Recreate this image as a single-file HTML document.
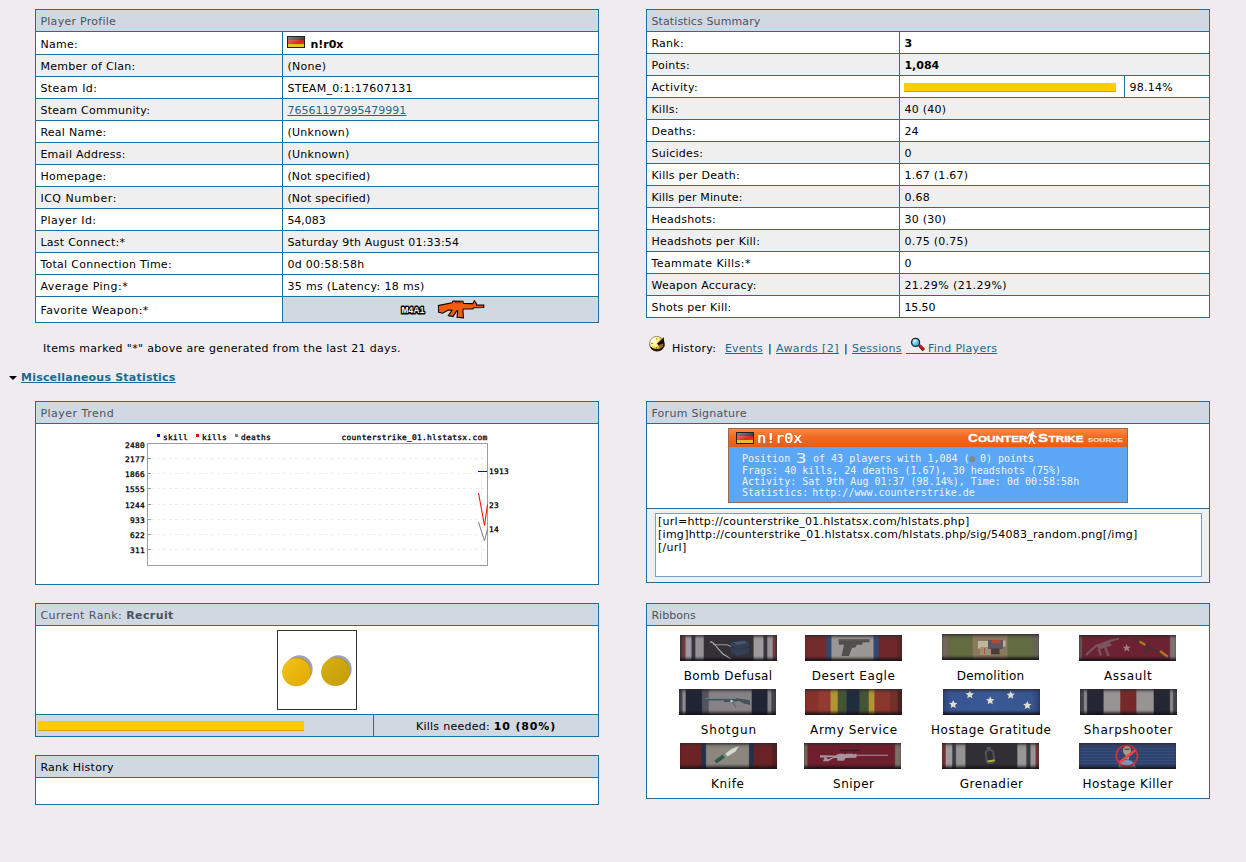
<!DOCTYPE html>
<html lang="en">
<head>
<meta charset="utf-8">
<title>HLstatsX - Player Details</title>
<style>
html,body{margin:0;padding:0;}
body{width:1246px;height:862px;background:#efebef;position:relative;overflow:hidden;
 font-family:"DejaVu Sans","Liberation Sans",sans-serif;font-size:11px;color:#000;}
.tbl{position:absolute;background:#1b719b;padding:1px;display:grid;gap:1px;box-sizing:border-box;}
.tbl>div{background:#fff;padding-left:4.4px;white-space:nowrap;overflow:hidden;box-sizing:border-box;
 display:flex;align-items:center;letter-spacing:0.27px;}
.tbl>div.h{background:#d0d8e1;color:#4d535b;grid-column:1/-1;}
.tbl>div.a{background:#efefef;}
a{color:#1b6a8e;text-decoration:underline;}
b{font-weight:bold;letter-spacing:0;}
#profile{left:35px;top:9px;width:564px;grid-template-columns:246px 315px;
 grid-template-rows:21px 22px repeat(11,21px) 25px;}
#summary{left:646px;top:9px;width:564px;grid-template-columns:252px 224px 84px;
 grid-template-rows:repeat(14,21px);}
#summary>div.v{grid-column:2/4;}
.abs{position:absolute;white-space:nowrap;letter-spacing:0.27px;}

.tbl>div{padding-top:2px;}
.flag{display:inline-block;width:18px;height:12px;box-sizing:border-box;border:1px solid #222;
 background:linear-gradient(#222 0,#3a3a3a 33%,#d8261c 33%,#e0301c 66%,#f0b420 66%,#e8c040 100%);margin-right:5px;position:relative;top:-2px;}
.flag:after{content:"";position:absolute;left:0;top:0;right:0;bottom:0;background:linear-gradient(160deg,rgba(255,255,255,.45) 0,rgba(255,255,255,.12) 45%,rgba(255,255,255,0) 55%);}
.bar{display:inline-block;height:9px;background:#ffcc00;border-bottom:1px solid #d8a000;box-sizing:border-box;}
.tbl>div.wpn{background:#d0d8e1;padding:0;position:relative;}
#misc{left:21px;top:371px;font-weight:bold;letter-spacing:0.21px;}
#misc a{text-underline-offset:1px;}
.tri{position:absolute;left:9px;top:376px;width:0;height:0;border-left:4px solid transparent;border-right:4px solid transparent;border-top:4px solid #000;}


#trend{left:35px;top:401px;width:564px;grid-template-columns:562px;grid-template-rows:21px 160px;}
#trend>div.c{padding:0;display:block;}
#sig{left:646px;top:401px;width:564px;grid-template-columns:562px;grid-template-rows:21px 84px 73px;}
#sig>div.c{padding:0;display:block;position:relative;letter-spacing:0;}
#rank{left:35px;top:603px;width:564px;grid-template-columns:337px 224px;grid-template-rows:21px 88px 21px;}
#rankh{left:35px;top:755px;width:564px;grid-template-columns:562px;grid-template-rows:21px 26px;}
#ribbons{left:646px;top:603px;width:564px;grid-template-columns:562px;grid-template-rows:21px 172px;}
.mono{font-family:"DejaVu Sans Mono","Liberation Mono",monospace;}
.sigbox{position:absolute;left:81px;top:4px;width:400px;height:75px;box-sizing:border-box;border:1px solid #9a6a50;background:#5ca6f6;overflow:hidden;}
.sigtop{position:absolute;left:0;top:0;width:398px;height:18px;background:linear-gradient(#f88a48 0,#f06a22 45%,#e85c14 100%);}
.sigtxt{position:absolute;left:13px;color:#eef4fc;font-size:10px;line-height:11px;white-space:pre;}
.ta{position:absolute;left:8px;top:4px;width:547px;height:64px;box-sizing:border-box;border:1px solid #7f9db9;background:#fff;
 font-family:"DejaVu Sans","Liberation Sans",sans-serif;font-size:11px;line-height:13px;padding:1px 2px;letter-spacing:0.27px;white-space:pre;overflow:hidden;color:#000;}
.rib{position:absolute;width:97px;height:26px;overflow:hidden;filter:brightness(1.12) saturate(.95);}
.rib:after{content:"";position:absolute;left:0;top:0;right:0;bottom:0;background:linear-gradient(rgba(48,40,44,.8) 0,rgba(48,40,44,.5) 1.5px,rgba(48,40,44,.15) 3px,rgba(0,0,0,0) 5px,rgba(0,0,0,0) 21px,rgba(20,16,20,.35) 23px,rgba(20,16,20,.85) 25px);box-shadow:inset 0 0 2px 0 rgba(20,16,20,.55);}
.rl{position:absolute;font-size:12px;width:160px;text-align:center;letter-spacing:0.3px;white-space:nowrap;}
</style>
</head>
<body>

<div class="tbl" id="profile">
 <div class="h">Player Profile</div>
 <div>Name:</div><div><span class="flag"></span><b>n!r0x</b></div>
 <div class="a">Member of Clan:</div><div class="a">(None)</div>
 <div style="letter-spacing:0.46px">Steam Id:</div><div>STEAM_0:1:17607131</div>
 <div class="a">Steam Community:</div><div class="a" style="letter-spacing:0px"><a>76561197995479991</a></div>
 <div>Real Name:</div><div>(Unknown)</div>
 <div class="a">Email Address:</div><div class="a">(Unknown)</div>
 <div>Homepage:</div><div style="letter-spacing:0.16px">(Not specified)</div>
 <div class="a" style="letter-spacing:0.52px">ICQ Number:</div><div class="a" style="letter-spacing:0.16px">(Not specified)</div>
 <div style="letter-spacing:0.44px">Player Id:</div><div style="letter-spacing:-0.03px">54,083</div>
 <div class="a">Last Connect:*</div><div class="a" style="letter-spacing:0.20px">Saturday 9th August 01:33:54</div>
 <div>Total Connection Time:</div><div>0d 00:58:58h</div>
 <div style="letter-spacing:0.46px">Average Ping:*</div><div style="letter-spacing:0.34px">35 ms (Latency: 18 ms)</div>
 <div style="letter-spacing:0.43px">Favorite Weapon:*</div><div class="wpn"><svg style="position:absolute;left:112px;top:0" width="100" height="25" viewBox="395 297 100 25">
  <text x="401.5" y="313" font-family="'Liberation Sans','DejaVu Sans',sans-serif" font-weight="bold" font-size="9.5" textLength="23" lengthAdjust="spacingAndGlyphs" fill="#000" stroke="#000" stroke-width="3" stroke-linejoin="round">M4A1</text>
  <text x="401.5" y="313" font-family="'Liberation Sans','DejaVu Sans',sans-serif" font-weight="bold" font-size="9.5" textLength="23" lengthAdjust="spacingAndGlyphs" fill="#fff">M4A1</text>
  <path d="M438.4 305.6L439 305.4 452 302.7 453 301 462.9 301.2 463.5 303.4 471.8 303.6 472.9 303.6 474.4 300.8 476.5 304 476.5 305.1 483.8 305.1 483.8 307.5 473.4 307.7 472.9 309 463.5 309 462.9 310.3 463.5 317.8 457 317.3 457.7 310.9 456.7 310.9 453 316.6 448.3 315.6 452 310.3 448.3 310 442.6 313.2 438.6 312.4Z" fill="#f25a0e" stroke="#100800" stroke-width="1.1" stroke-linejoin="miter"/><path d="M455 302.7h6.5" stroke="#7a2c04" stroke-width=".9"/>
 </svg></div>
</div>

<div class="tbl" id="summary">
 <div class="h" style="letter-spacing:0.12px">Statistics Summary</div>
 <div>Rank:</div><div class="v"><b>3</b></div>
 <div class="a">Points:</div><div class="a v"><b>1,084</b></div>
 <div>Activity:</div><div><span class="bar" style="width:212px"></span></div><div>98.14%</div>
 <div class="a">Kills:</div><div class="a v">40 (40)</div>
 <div>Deaths:</div><div class="v" style="letter-spacing:0px">24</div>
 <div class="a">Suicides:</div><div class="a v">0</div>
 <div>Kills per Death:</div><div class="v">1.67 (1.67)</div>
 <div class="a" style="letter-spacing:0.15px">Kills per Minute:</div><div class="a v">0.68</div>
 <div>Headshots:</div><div class="v">30 (30)</div>
 <div class="a">Headshots per Kill:</div><div class="a v">0.75 (0.75)</div>
 <div style="letter-spacing:0.44px">Teammate Kills:*</div><div class="v">0</div>
 <div class="a">Weapon Accuracy:</div><div class="a v" style="letter-spacing:0.45px">21.29% (21.29%)</div>
 <div>Shots per Kill:</div><div class="v" style="letter-spacing:-0.10px">15.50</div>
</div>


<div class="abs" id="note" style="left:43px;top:342px;letter-spacing:0.33px">Items marked "*" above are generated from the last 21 days.</div>
<div class="tri"></div>
<div class="abs" id="misc"><a>Miscellaneous Statistics</a></div>

<div class="abs" id="hist" style="left:672px;top:342px;">History:</div>
<div class="abs" style="left:725px;top:342px;letter-spacing:0.1px"><a>Events</a></div>
<div class="abs" style="left:768px;top:342px;">|</div>
<div class="abs" style="left:776px;top:342px;letter-spacing:0.39px"><a>Awards [2]</a></div>
<div class="abs" style="left:844px;top:342px;">|</div>
<div class="abs" style="left:852px;top:342px;"><a>Sessions</a></div>
<div class="abs" style="left:928px;top:342px;"><a>Find Players</a></div>
<div class="abs" style="left:906px;top:353px;width:23px;height:1px;background:#1b6a8e;"></div>


<svg class="abs" style="left:648px;top:335px" width="18" height="18" viewBox="0 0 18 18">
 <defs><radialGradient id="hg" cx="0.3" cy="0.3" r="0.8"><stop offset="0" stop-color="#fff"/><stop offset="0.45" stop-color="#fff48a"/><stop offset="0.8" stop-color="#f0c000"/><stop offset="1" stop-color="#c08800"/></radialGradient></defs>
 <circle cx="9" cy="9" r="7.6" fill="#1a1400"/>
 <circle cx="8.6" cy="8.4" r="7" fill="url(#hg)" stroke="#8a8a8a" stroke-width="0.8"/>
 <path d="M9 8.5L15.8 2.2L16.6 11.5L12.5 13.5z" fill="#100c08"/>
 <path d="M10 10L15.5 8.5L15 12.5L12 14z" fill="#b07830" opacity="0.8"/>
 <path d="M3 12.5C5 16 12 17 15 12.5C13 15 5.5 15.5 3 12.5z" fill="#201800" stroke="#201800" stroke-width="1.2"/>
 <path d="M9 8.5L15 2.5" stroke="#c89000" stroke-width="1" stroke-dasharray="1 0.6"/>
 <path d="M8.7 3v1.8" stroke="#e09000" stroke-width="1"/>
 <path d="M3.2 8.5h1.6M8.7 12v2" stroke="#6a5a30" stroke-width="0.9"/>
</svg>
<svg class="abs" style="left:910px;top:337px" width="16" height="15" viewBox="0 0 16 15">
 <defs><radialGradient id="mg" cx="0.35" cy="0.3" r="0.8"><stop offset="0" stop-color="#e8ffff"/><stop offset="0.5" stop-color="#5ccdf0"/><stop offset="1" stop-color="#2a9ae0"/></radialGradient></defs>
 <path d="M9.5 8.5L13.8 13.2" stroke="#201010" stroke-width="3.2" stroke-linecap="butt"/>
 <path d="M9.3 8.0L13.6 12.7" stroke="#e81020" stroke-width="1.9"/>
 <circle cx="5.6" cy="5.4" r="4" fill="url(#mg)" stroke="#202020" stroke-width="1.3"/>
</svg>
<div class="tbl" id="trend">
 <div class="h" style="letter-spacing:0.49px">Player Trend</div>
 <div class="c"><svg width="562" height="160" viewBox="36 424 562 160" style="display:block">
  <rect x="147.5" y="443.5" width="340" height="122" fill="#fff" stroke="#98a0a0" stroke-width="1"/>
  <g stroke="#ececec" stroke-width="1" stroke-dasharray="3 3" fill="none">
   <path d="M151 458.5H487M151 473.5H487M151 488.5H487M151 504.5H487M151 519.5H487M151 534.5H487M151 549.5H487"/>
   <path d="M481.5 444V565"/>
  </g>
  <path d="M148 458.5h3M148 473.5h3M148 488.5h3M148 504.5h3M148 519.5h3M148 534.5h3M148 549.5h3" stroke="#98a0a0" stroke-width="1"/>
  <g font-family="'DejaVu Sans Mono','Liberation Mono',monospace" font-size="7.6" fill="#000" stroke="#000" stroke-width="0.3" text-anchor="end">
   <text x="145" y="448" textLength="20" lengthAdjust="spacingAndGlyphs">2480</text>
   <text x="145" y="462" textLength="20" lengthAdjust="spacingAndGlyphs">2177</text>
   <text x="145" y="477" textLength="20" lengthAdjust="spacingAndGlyphs">1866</text>
   <text x="145" y="492" textLength="20" lengthAdjust="spacingAndGlyphs">1555</text>
   <text x="145" y="508" textLength="20" lengthAdjust="spacingAndGlyphs">1244</text>
   <text x="145" y="523" textLength="15" lengthAdjust="spacingAndGlyphs">933</text>
   <text x="145" y="538" textLength="15" lengthAdjust="spacingAndGlyphs">622</text>
   <text x="145" y="553" textLength="15" lengthAdjust="spacingAndGlyphs">311</text>
   <text x="487.5" y="440" textLength="146" lengthAdjust="spacingAndGlyphs">counterstrike_01.hlstatsx.com</text>
  </g>
  <g font-family="'DejaVu Sans Mono','Liberation Mono',monospace" font-size="7.6" fill="#000" stroke="#000" stroke-width="0.3">
   <text x="163" y="440" textLength="25" lengthAdjust="spacingAndGlyphs">skill</text>
   <text x="202" y="440" textLength="25" lengthAdjust="spacingAndGlyphs">kills</text>
   <text x="241" y="440" textLength="30" lengthAdjust="spacingAndGlyphs">deaths</text>
   <text x="489" y="474" textLength="20" lengthAdjust="spacingAndGlyphs">1913</text>
   <text x="489" y="508" textLength="10" lengthAdjust="spacingAndGlyphs">23</text>
   <text x="489" y="532" textLength="10" lengthAdjust="spacingAndGlyphs">14</text>
  </g>
  <rect x="157" y="434" width="3" height="3" fill="#0000ff"/>
  <rect x="196" y="434" width="3" height="3" fill="#ff0000"/>
  <rect x="235" y="434" width="3" height="3" fill="#808080"/>
  <path d="M478 471.5H487" stroke="#0000ff" stroke-width="1" fill="none"/>
  <path d="M478.5 493L484.5 525.5L487.5 504.5" stroke="#ff0000" stroke-width="1" fill="none"/>
  <path d="M478.5 522L484.5 541L487.5 528.5" stroke="#808080" stroke-width="1" fill="none"/>
 </svg></div>
</div>

<div class="tbl" id="sig">
 <div class="h">Forum Signature</div>
 <div class="c">
  <div class="sigbox mono">
   <div class="sigtop"></div>
   <span class="flag" style="position:absolute;left:7px;top:3px;margin:0;height:12px"></span>
   <div style="position:absolute;left:28px;top:0px;color:#fff;font-size:13.6px;line-height:18px;transform:scaleX(1.1);transform-origin:0 0;text-shadow:0.4px 0 0 #fff;">n!r0x</div>
   <svg style="position:absolute;left:238px;top:3px;overflow:visible" width="158" height="13" viewBox="0 0 158 13">
    <g font-family="'Liberation Sans','DejaVu Sans',sans-serif" font-weight="bold" fill="#fff" stroke="#fff" stroke-width="0.3">
     <text x="1.2" y="9.6" font-size="10.4" textLength="9.4" lengthAdjust="spacingAndGlyphs">C</text>
     <text x="11" y="9.6" font-size="8.3" textLength="49.4" lengthAdjust="spacingAndGlyphs">OUNTER</text>
     <text x="71" y="9.6" font-size="10.4" textLength="10" lengthAdjust="spacingAndGlyphs">S</text>
     <text x="81.6" y="9.6" font-size="8.3" textLength="35" lengthAdjust="spacingAndGlyphs">TRIKE</text>
    </g>
    <text x="120.7" y="9.8" font-family="'Liberation Sans','DejaVu Sans',sans-serif" font-weight="bold" font-size="4.9" textLength="35" lengthAdjust="spacingAndGlyphs" fill="#fbd4b4" stroke="#fbd4b4" stroke-width="0.25">SOURCE</text>
    <path d="M65.6-1.2l1.8 1.4-.9 2.4 3.6 2.2-.5.9-3.2-1.2-.4 2.6 2.4 4.8h-1.6l-2.3-3.9-1.6 3.9h-1.5l1.6-5.4-.6-2.4-1.6 2.6-.8-.5 2.2-4.4 1.9-.6z" fill="#fff"/>
   </svg>
   <div class="sigtxt" style="top:23px;">Position <span style="font-size:14px;line-height:11px;position:relative;top:0.5px;display:inline-block;width:10.8px;transform:scaleX(1.28);transform-origin:0 50%">3</span> of 43 players with 1,084 (<span style="color:#808890;letter-spacing:-1.7px">&#9679;</span> 0) points</div>
   <div class="sigtxt" style="top:36px;">Frags: 40 kills, 24 deaths (1.67), 30 headshots (75%)</div>
   <div class="sigtxt" style="top:47px;">Activity: Sat 9th Aug 01:37 (98.14%), Time: 0d 00:58:58h</div>
   <div class="sigtxt" style="top:58px;">Statistics:<span style="letter-spacing:-2px"> </span>http://www.counterstrike.de</div>
  </div>
 </div>
 <div class="c" style="background:#efefef">
  <div class="ta">[url=http://counterstrike_01.hlstatsx.com/hlstats.php]
[img]http://counterstrike_01.hlstatsx.com/hlstats.php/sig/54083_random.png[/img]
[/url]</div>
 </div>
</div>

<div class="tbl" id="rank">
 <div class="h" style="letter-spacing:0.45px">Current Rank:&nbsp;<b style="letter-spacing:0.4px">Recruit</b></div>
 <div style="grid-column:1/-1;padding:0;position:relative;">
  <svg style="position:absolute;left:241px;top:4px" width="80" height="80" viewBox="0 0 80 80">
   <defs>
    <linearGradient id="cg1" x1="0" y1="0" x2="1" y2="1"><stop offset="0" stop-color="#f4c418"/><stop offset="1" stop-color="#e0a800"/></linearGradient>
    <linearGradient id="cg2" x1="0" y1="0" x2="1" y2="1"><stop offset="0" stop-color="#d8b010"/><stop offset="1" stop-color="#c49c08"/></linearGradient>
   </defs>
   <rect x="0.5" y="0.5" width="79" height="79" fill="#fff" stroke="#333"/>
   <ellipse cx="22.3" cy="39" rx="13.4" ry="13.8" fill="#a2a2b4"/>
   <ellipse cx="20" cy="41.6" rx="14" ry="14" fill="#b8900c"/>
   <ellipse cx="19.3" cy="42.3" rx="14.2" ry="14" fill="url(#cg1)"/>
   <ellipse cx="61.3" cy="39" rx="13.4" ry="13.8" fill="#a2a2b4"/>
   <ellipse cx="59" cy="41.4" rx="14" ry="14" fill="#a88c0c"/>
   <ellipse cx="58.4" cy="42.1" rx="14.3" ry="14" fill="url(#cg2)"/>
  </svg>
 </div>
 <div class="h" style="grid-column:auto;padding:0 0 0 2px"><span class="bar" style="width:266px;height:10px"></span></div>
 <div class="h" style="grid-column:auto;color:#000;justify-content:center;padding-left:0">Kills needed:&nbsp;<b style="letter-spacing:0.85px">10 (80%)</b></div>
</div>
<div class="tbl" id="rankh">
 <div class="h" style="color:#000">Rank History</div>
 <div></div>
</div>

<div class="tbl" id="ribbons">
 <div class="h" style="letter-spacing:0.03px">Ribbons</div>
 <div style="padding:0;position:relative;display:block">
  <div class="rib" style="left:33px;top:9px;background:linear-gradient(90deg,#3c3438 0.0px,#3c3438 1.8px,#6c3430 3.2px,#6c3430 4.8px,#8c8a8e 6.2px,#8c8a8e 10.8px,#30303c 12.2px,#30303c 14.6px,#868488 16.0px,#868488 23.1px,#2e2c30 24.5px,#2e2c30 72.9px,#8c8a8c 74.3px,#8c8a8c 82.7px,#30303c 84.1px,#30303c 86.5px,#868488 87.9px,#868488 92.1px,#6c3430 93.5px,#6c3430 94.6px,#3c3438 96.0px,#3c3438 97.0px)"><svg width="97" height="26" viewBox="0 0 97 26" style="position:absolute;left:0;top:0;filter:blur(.45px)"><path d="M30 7c2.5-.5 4 1.5 5.5 3.5s4 5 7.5 8.5l8 5" stroke="#9a9a9e" stroke-width="1.2" fill="none"/><path d="M33 9.5c4 .3 9 .2 14 .2l6 2.5" stroke="#84848a" stroke-width="1.1" fill="none"/><path d="M51 7l14-2 4 2.5v10.5l-12 3-6-3z" fill="#2e374c"/><path d="M53 7.5l11-1.5 3 1.8-10 2.2z" fill="#434e66"/><path d="M51 12l6 2.5 12-2.5" stroke="#2a3040" stroke-width="1" fill="none"/></svg></div>
  <div class="rl" style="left:1.1px;top:43px;letter-spacing:0.4px">Bomb Defusal</div>
  <div class="rib" style="left:158px;top:9px;background:linear-gradient(90deg,#6a2626 0.0px,#6a2626 20.6px,#2c4068 22.0px,#2c4068 25.7px,#8a8884 27.1px,#8a8884 67.8px,#2c4068 69.2px,#2c4068 72.9px,#642424 74.3px,#642424 91.3px,#562020 92.7px,#562020 97.0px)"><svg width="97" height="26" viewBox="0 0 97 26" style="position:absolute;left:0;top:0;filter:blur(.45px)"><path d="M33.5 4.3h31v3h-7v2.5h-6c.5 2-1.5 3.5-4.5 3l-3 8.2h-7.5l2.5-11.2h-5z" fill="#4a4646"/><path d="M33.5 4.3h31v1h-31z" fill="#5c5858"/></svg></div>
  <div class="rl" style="left:126.6px;top:43px;letter-spacing:0.56px">Desert Eagle</div>
  <div class="rib" style="left:295px;top:8px;background:linear-gradient(90deg,#665c50 0.0px,#665c50 4.8px,#586038 6.2px,#586038 29.9px,#7c6c52 31.3px,#7c6c52 64.8px,#586038 66.2px,#586038 89.9px,#5c5850 91.3px,#5c5850 97.0px)"><svg width="97" height="26" viewBox="0 0 97 26" style="position:absolute;left:0;top:0;filter:blur(.45px)"><rect x="36" y="7" width="10" height="7.5" fill="#aca48c"/><rect x="38" y="13" width="18" height="8" fill="#8c8068"/><rect x="46" y="6" width="15" height="9" fill="#524e58"/><rect x="50" y="6" width="8.5" height="3.2" fill="#a04030"/><rect x="49" y="14.5" width="8.5" height="6" fill="#3e3632"/><rect x="61" y="6.5" width="2.5" height="6" fill="#a8a08c"/><path d="M42.5 14v6" stroke="#a04828" stroke-width="1"/></svg></div>
  <div class="rl" style="left:263.6px;top:43px;letter-spacing:0.23px">Demolition</div>
  <div class="rib" style="left:432px;top:9px;background:linear-gradient(90deg,#5c4c4c 0.0px,#5c4c4c 2.3px,#641e2c 3.7px,#641e2c 90.3px,#6c6864 91.7px,#6c6864 97.0px)"><svg width="97" height="26" viewBox="0 0 97 26" style="position:absolute;left:0;top:0;filter:blur(.45px)"><path d="M7 20l10-9 12-4.5 11-3" stroke="#6c4c54" stroke-width="2.2" fill="none"/><path d="M17 10l13-3.5 3 4-13 4z" fill="#6c4c54"/><path d="M19.5 13.5l2.5 7M26 12l3.5 9" stroke="#6a4a52" stroke-width="2.4" fill="none"/><path d="M47.7 8.7l1.1 3h3.2l-2.6 1.9 1 3.1-2.7-1.9-2.7 1.9 1-3.1-2.6-1.9h3.2z" fill="#8c7478"/><path d="M55 4l10 5 12 7 11 7" stroke="#3e2c2c" stroke-width="2" fill="none"/><path d="M60.5 6.5l6 3.5" stroke="#a86420" stroke-width="2.4"/><path d="M81 16l8 6" stroke="#a86420" stroke-width="2.6"/><path d="M69 12l-3 6" stroke="#3e2c2c" stroke-width="2.4"/></svg></div>
  <div class="rl" style="left:401.2px;top:43px;letter-spacing:0.68px">Assault</div>
  <div class="rib" style="left:32px;top:63px;background:linear-gradient(90deg,#3c3c44 0.0px,#3c3c44 2.7px,#7c7c80 4.1px,#7c7c80 6.1px,#1c2030 7.5px,#1c2030 22.3px,#4a4a52 23.7px,#4a4a52 29.1px,#787478 30.5px,#787478 72.1px,#1c2030 73.5px,#1c2030 87.8px,#747478 89.2px,#747478 91.6px,#3c3c44 93.0px,#3c3c44 97.0px)"><svg width="97" height="26" viewBox="0 0 97 26" style="position:absolute;left:0;top:0;filter:blur(.45px)"><path d="M25.5 9.2h32l8 1 5.5 1.2v4.6l-6-1.5-5-2.5h-6l-1 1h-8v-1.5h-19.5z" fill="#3a4a52"/><path d="M26 9.6h31" stroke="#6c8088" stroke-width=".8"/><path d="M58 12l-4 1.5 3 5" stroke="#4c5c64" stroke-width="1.2" fill="none"/><circle cx="52.5" cy="12" r="1.2" fill="#a8b8bc"/></svg></div>
  <div class="rl" style="left:1.8px;top:97px;letter-spacing:0.87px">Shotgun</div>
  <div class="rib" style="left:158px;top:63px;background:linear-gradient(90deg,#7c2c24 0.0px,#7c2c24 12.9px,#86342a 14.3px,#86342a 24.8px,#a08428 26.2px,#a08428 32.1px,#3c4c30 33.5px,#3c4c30 41.0px,#1c2838 42.4px,#1c2838 53.8px,#3c4c30 55.2px,#3c4c30 63.1px,#a08428 64.5px,#a08428 68.7px,#7e3028 70.1px,#7e3028 84.3px,#6c2824 85.7px,#6c2824 92.1px,#402020 93.5px,#402020 97.0px)"></div>
  <div class="rl" style="left:126.9px;top:97px;letter-spacing:0.64px">Army Service</div>
  <div class="rib" style="left:296px;top:63px;background:linear-gradient(90deg,#2a3e6c 0,#304c84 8px,#325088 50px,#304c84 89px,#283a68 97px)"><svg width="97" height="26" viewBox="0 0 97 26" style="position:absolute;left:0;top:0;filter:blur(.45px)"><g fill="#c8c8b8"><path id="st" d="M0-4.2l1.2 2.7 3 .3-2.3 2 .7 3L0 2.2-2.6 3.8l.7-3-2.3-2 3-.3z" transform="translate(10.2 15.3)"/><use href="#st" x="16.6" y="-9.8"/><use href="#st" x="37" y="-3.8"/><use href="#st" x="57.5" y="-9.3"/><use href="#st" x="74.1" y=".9"/></g></svg></div>
  <div class="rl" style="left:264.3px;top:97px;letter-spacing:0.6px">Hostage Gratitude</div>
  <div class="rib" style="left:433px;top:63px;background:linear-gradient(90deg,#3c3c44 0.0px,#3c3c44 3.3px,#7c7c7c 4.7px,#7c7c7c 6.3px,#20222e 7.7px,#20222e 22.9px,#888484 24.3px,#888484 39.5px,#6c2424 40.9px,#6c2424 55.6px,#888484 57.0px,#888484 73.1px,#20222e 74.5px,#20222e 89.3px,#7c7c7c 90.7px,#7c7c7c 92.3px,#3c3c44 93.7px,#3c3c44 97.0px)"></div>
  <div class="rl" style="left:401.5px;top:97px;letter-spacing:0.73px">Sharpshooter</div>
  <div class="rib" style="left:33px;top:117px;background:linear-gradient(90deg,#641e20 0.0px,#641e20 20.6px,#1c2c44 22.0px,#1c2c44 25.3px,#7c7870 26.7px,#7c7870 68.3px,#1c2c44 69.7px,#1c2c44 72.9px,#601e20 74.3px,#601e20 91.3px,#4c1a1c 92.7px,#4c1a1c 97.0px)"><svg width="97" height="26" viewBox="0 0 97 26" style="position:absolute;left:0;top:0;filter:blur(.45px)"><path d="M35.5 19l9-6.5" stroke="#2c4c44" stroke-width="3.6" fill="none"/><path d="M44 13.5l2.5-2" stroke="#6c8478" stroke-width="4"/><path d="M45.5 10.5l6-4.5 7.5-3-3.5 5.5-8 5z" fill="#c0c4b8"/></svg></div>
  <div class="rl" style="left:0.8px;top:151px;letter-spacing:0.64px">Knife</div>
  <div class="rib" style="left:157px;top:117px;background:linear-gradient(90deg,#6c5c54 0.0px,#6c5c54 2.7px,#661a28 4.1px,#661a28 90.3px,#6c645c 91.7px,#6c645c 97.0px)"><svg width="97" height="26" viewBox="0 0 97 26" style="position:absolute;left:0;top:0;filter:blur(.45px)"><path d="M16 12.2h4.5l10.5 .3 4-1.7h17.5v.9h31.5v1.1h-31.5v1.9l-11 .3-1.5 2.8h-6.5l-.5-2.8-4 .3-4.5 2.9h-5.5l1.5-3.8h-4.5z" fill="#94848c"/><path d="M22 14.2h7l-5 2z" fill="#661a28"/><path d="M35.5 6.5h20v1.6h-20z" fill="#341820"/><path d="M41 8v3.5M50 8v3.5" stroke="#341820" stroke-width="1"/></svg></div>
  <div class="rl" style="left:126.8px;top:151px;letter-spacing:0.5px">Sniper</div>
  <div class="rib" style="left:295px;top:117px;background:linear-gradient(90deg,#6c2c2c 0.0px,#6c2c2c 3.1px,#8c8c8c 4.5px,#8c8c8c 9.5px,#34343c 10.9px,#34343c 13.3px,#848484 14.7px,#848484 22.7px,#2c2a30 24.1px,#2c2a30 74.6px,#868686 76.0px,#868686 83.6px,#34343c 85.0px,#34343c 87.8px,#848484 89.2px,#848484 92.9px,#6c2c2c 94.3px,#6c2c2c 97.0px)"><svg width="97" height="26" viewBox="0 0 97 26" style="position:absolute;left:0;top:0;filter:blur(.45px)"><g transform="rotate(-8 48 13.5)"><rect x="43.2" y="6" width="9.6" height="15" rx="4" fill="#47474e"/><rect x="45.2" y="8" width="5.6" height="9.5" rx="2.5" fill="#2a2a30"/><rect x="45" y="17.2" width="7" height="1.6" fill="#a8a420"/><rect x="46" y="4" width="4" height="2.5" fill="#4c4c54"/></g></svg></div>
  <div class="rl" style="left:264.6px;top:151px;letter-spacing:0.45px">Grenadier</div>
  <div class="rib" style="left:432px;top:117px;background:repeating-linear-gradient(0deg,#283c64 0,#283c64 2px,#2e4470 2px,#2e4470 3px)"><svg width="97" height="26" viewBox="0 0 97 26" style="position:absolute;left:0;top:0;filter:blur(.45px)"><ellipse cx="48" cy="7.5" rx="4" ry="5" fill="#a08478"/><path d="M45.5 5.5h5v1.5h-5z" fill="#5c4444"/><rect x="46.5" y="11.5" width="3.5" height="5" fill="#9c8074"/><path d="M39 26c.5-6 4-9 9-9s8.5 3 9 9z" fill="#6c84a8"/><circle cx="47.8" cy="12.8" r="10.6" fill="none" stroke="#c02830" stroke-width="1.8"/><path d="M40.5 19.5L56 7.5" stroke="#d83c40" stroke-width="2.8"/></svg></div>
  <div class="rl" style="left:400.9px;top:151px;letter-spacing:0.49px">Hostage Killer</div>
 </div>
</div>

</body>
</html>
